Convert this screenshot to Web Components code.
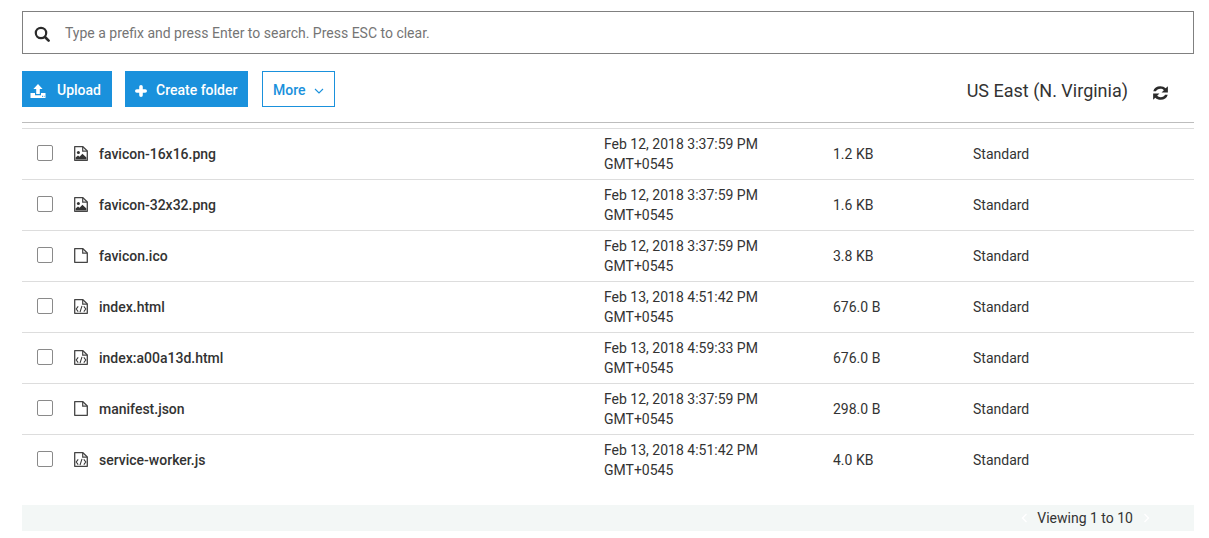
<!DOCTYPE html>
<html><head><meta charset="utf-8">
<style>
html,body{margin:0;padding:0;background:#fff}
body{font-family:Roboto,sans-serif;color:#333;width:1209px;height:538px;overflow:hidden}
s3-browser{display:block}
</style></head><body>
<s3-browser>
<s3-search placeholder="Type a prefix and press Enter to search. Press ESC to clear."></s3-search>
<s3-toolbar region="US East (N. Virginia)"></s3-toolbar>
<s3-table>
<s3-row icon="image" name="favicon-16x16.png" date="Feb 12, 2018 3:37:59 PM" size="1.2 KB"></s3-row>
<s3-row icon="image" name="favicon-32x32.png" date="Feb 12, 2018 3:37:59 PM" size="1.6 KB"></s3-row>
<s3-row icon="file" name="favicon.ico" date="Feb 12, 2018 3:37:59 PM" size="3.8 KB"></s3-row>
<s3-row icon="code" name="index.html" date="Feb 13, 2018 4:51:42 PM" size="676.0 B"></s3-row>
<s3-row icon="code" name="index:a00a13d.html" date="Feb 13, 2018 4:59:33 PM" size="676.0 B"></s3-row>
<s3-row icon="file" name="manifest.json" date="Feb 12, 2018 3:37:59 PM" size="298.0 B"></s3-row>
<s3-row icon="code" name="service-worker.js" date="Feb 13, 2018 4:51:42 PM" size="4.0 KB"></s3-row>
</s3-table>
<s3-pager text="Viewing 1 to 10"></s3-pager>
</s3-browser>
<script>
function def(name, render){
  customElements.define(name, class extends HTMLElement{
    connectedCallback(){
      if(this.shadowRoot) return;
      this.attachShadow({mode:'open'}).innerHTML = render(this);
    }
  });
}
const fileOutline = '<path d="M.7 .7H8.9L13.3 5V14.3H.7Z" fill="#fff" stroke="#454545" stroke-width="1.3" stroke-linejoin="round"/><path d="M8.7 .8V5.2H13.2" fill="none" stroke="#454545" stroke-width="1.2"/>';
const icons = {
  file: fileOutline,
  image: fileOutline + '<circle cx="4.4" cy="6.4" r="1.5" fill="#333"/><path d="M1.6 13.6V11.6L4 9.6 5.6 10.8 8.4 7.8 12.4 11.4V13.6Z" fill="#333"/>',
  code: fileOutline + '<path d="M4.2 7.4 2.2 10 4.2 12.6M9.8 7.4 11.8 10 9.8 12.6M8 6.8 6 13.2" fill="none" stroke="#3a3a3a" stroke-width="1.1"/>'
};
def('s3-search', el => `<style>
:host{display:block;margin:11px 15px 0 22px}
.box{box-sizing:border-box;height:43px;border:1px solid #808080;display:flex;align-items:center;padding-left:11px;gap:15px}
svg{width:16px;height:16px;flex:none;margin-top:2px}
span{font-size:14px;color:#757575}
</style><div class="box"><svg viewBox="0 0 16 16"><circle cx="7" cy="7" r="5.2" fill="none" stroke="#2b2b2b" stroke-width="2.2"/><path d="M11 11 14.6 14.6" stroke="#2b2b2b" stroke-width="2.6" stroke-linecap="round"/></svg><span>${el.getAttribute('placeholder')}</span></div>`);
def('s3-toolbar', el => `<style>
:host{display:flex;align-items:center;margin:17px 15px 0 22px;height:36px}
.btn{box-sizing:border-box;height:36px;display:flex;align-items:center;font-size:14px;font-weight:500;background:#1a91dc;color:#fff;padding-top:2px}
.btn svg{margin-top:2px}
.up{width:90px;padding-left:8px;gap:11px;margin-right:13px}
.cr{width:123px;padding-left:10px;gap:9px;margin-right:14px}
.more{width:73px;padding-left:10px;gap:8px;background:#fff;color:#1a91dc;border:1px solid #1a91dc;font-weight:500}
.spacer{flex:1}
.region{font-size:18px;color:#333;margin:2px 25px 0 0}
.ref{width:15px;height:14px;margin:8px 26px 0 0}
svg{flex:none}
</style>
<div class="btn up"><svg width="16" height="16" viewBox="0 0 16 16"><path d="M8 1 12.6 6H9.8V11H6.2V6H3.4Z" fill="#fff"/><path d="M.5 10H5V12.3H11V10H15.5V15H.5Z" fill="#fff"/><path d="M12 13.3H13M13.8 13.3H14.6" stroke="#1a91dc" stroke-width="1"/></svg><span>Upload</span></div>
<div class="btn cr"><svg width="12" height="12" viewBox="0 0 12 12"><path d="M6 1.8V10.2M1.8 6H10.2" stroke="#fff" stroke-width="3.6" stroke-linecap="round"/></svg><span>Create folder</span></div>
<div class="btn more"><span>More</span><svg width="10" height="6" viewBox="0 0 10 6"><path d="M1 1 5 5 9 1" fill="none" stroke="#1a91dc" stroke-width="1.1"/></svg></div>
<div class="spacer"></div>
<div class="region">${el.getAttribute('region')}</div>
<svg class="ref" viewBox="2.2 2.6 11.6 10.8" preserveAspectRatio="none"><path d="M2.4 6.6C3 4 5.2 2.7 7.8 2.7 9.6 2.7 11 3.4 12 4.4L13.7 2.7V7.6H8.8L10.6 5.8C9.9 5.1 9 4.7 7.9 4.7 6.3 4.7 5 5.4 4.5 6.6Z" fill="#2b2b2b"/><path d="M13.6 9.4C13 12 10.8 13.3 8.2 13.3 6.4 13.3 5 12.6 4 11.6L2.3 13.3V8.4H7.2L5.4 10.2C6.1 10.9 7 11.3 8.1 11.3 9.7 11.3 11 10.6 11.5 9.4Z" fill="#2b2b2b"/></svg>`);
def('s3-table', el => `<style>
:host{display:block;margin:15px 15px 0 22px;border-top:1px solid #bdbdbd;padding-top:5px}
.in{border-top:1px solid #ddd}
</style><div class="in"><slot></slot></div>`);
def('s3-row', el => {
  const d = el.getAttribute('date');
  return `<style>
:host{display:flex;align-items:center;box-sizing:border-box;height:51px;border-bottom:1px solid #ddd;font-size:14px;color:#333}
:host(:last-child){border-bottom-color:transparent}
.chk{box-sizing:border-box;width:16px;height:16px;border:1px solid #8a8a8a;border-radius:2px;margin:0 21px 3px 15px;background:#fff;flex:none}
svg{flex:none;margin:0 11px 1px 0;width:14px;height:15px}
.name{width:505px;font-weight:500;flex:none}
.date{width:229px;line-height:20px;flex:none}
.size{width:140px;flex:none}
</style><div class="chk"></div><svg viewBox="0 0 14 15">${icons[el.getAttribute('icon')]}</svg><div class="name">${el.getAttribute('name')}</div><div class="date">${d}<br>GMT+0545</div><div class="size">${el.getAttribute('size')}</div><div>Standard</div>`;
});
def('s3-pager', el => `<style>
:host{display:flex;align-items:center;justify-content:flex-end;box-sizing:border-box;margin:19px 15px 0 22px;height:26px;background:#f3f7f6;font-size:14px;color:#333;padding-right:44px}
span{margin:0 10px 0 9px}
svg{flex:none}
</style><svg width="7" height="10" viewBox="0 0 7 10"><path d="M5.5 1 1.5 5 5.5 9" fill="none" stroke="#fff" stroke-width="1.4"/></svg><span>${el.getAttribute('text')}</span><svg width="7" height="10" viewBox="0 0 7 10"><path d="M1.5 1 5.5 5 1.5 9" fill="none" stroke="#fff" stroke-width="1.4"/></svg>`);
</script>
</body></html>
